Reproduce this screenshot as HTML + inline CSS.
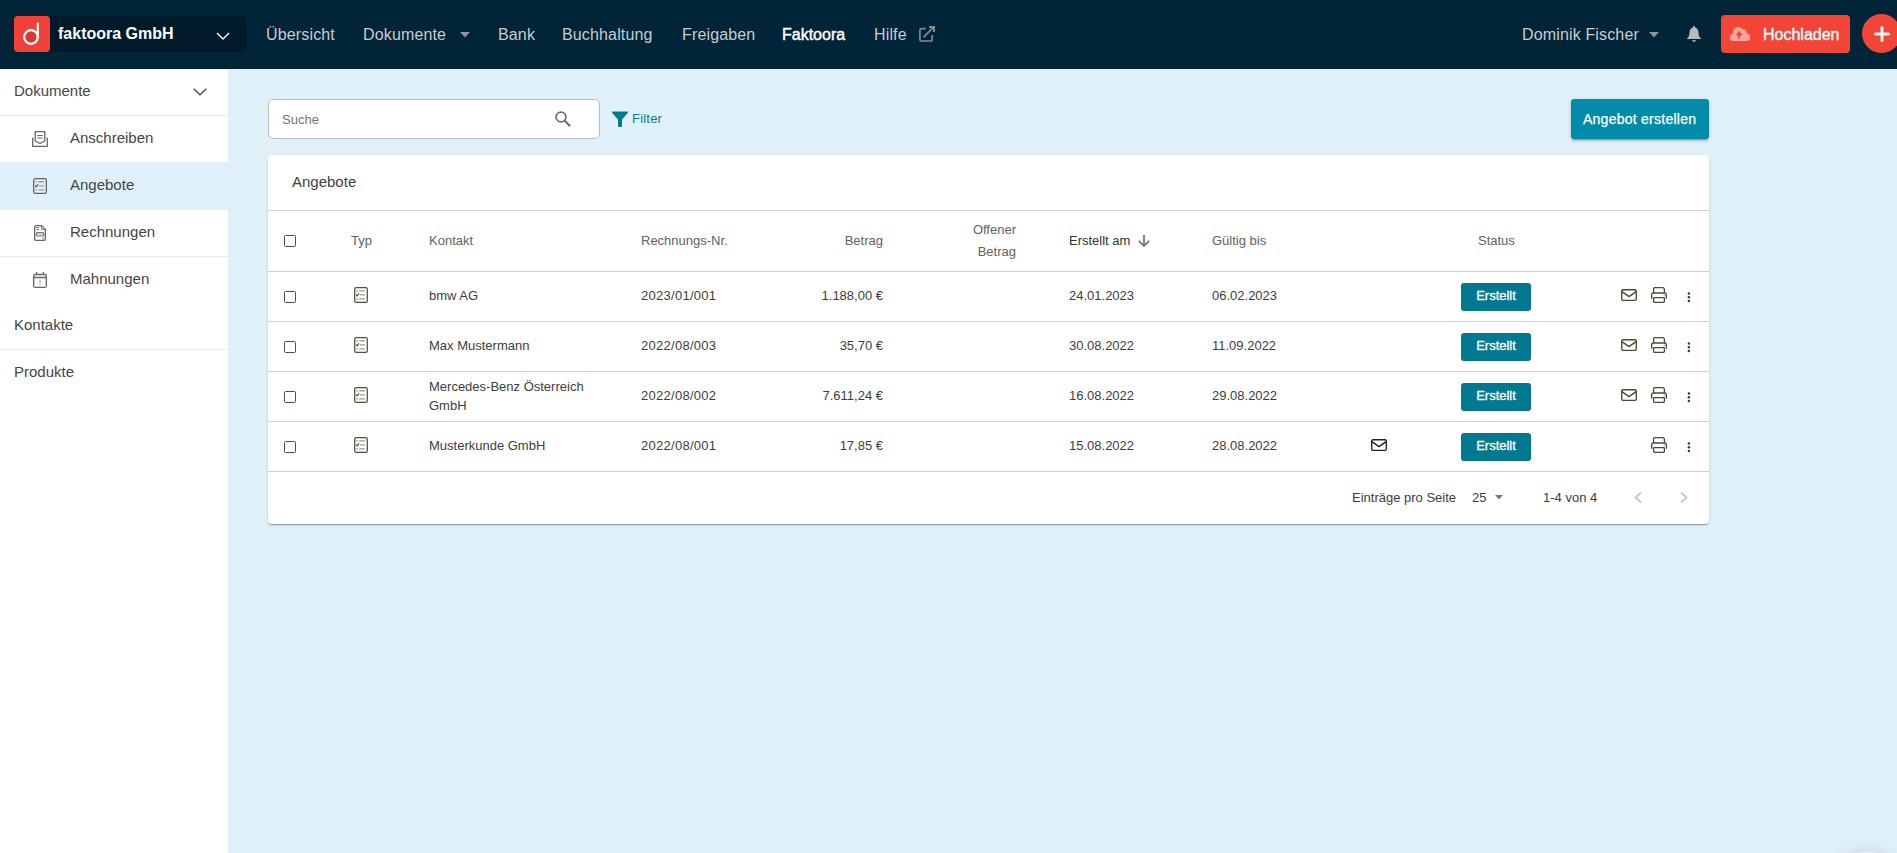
<!DOCTYPE html>
<html><head><meta charset="utf-8">
<style>
*{box-sizing:border-box;margin:0;padding:0}
html,body{width:1897px;height:853px;overflow:hidden}
body{font-family:"Liberation Sans",sans-serif;background:#e0f0f8;position:relative}
.a{position:absolute;white-space:nowrap;line-height:1}
svg{position:absolute;overflow:visible}
#nav{position:absolute;left:0;top:0;width:1897px;height:69px;background:#022437}
.nv{font-size:16px;color:#c6ccd0;top:27px;letter-spacing:0.15px}
#side{position:absolute;left:0;top:69px;width:228px;height:784px;background:#fff}
.si{font-size:15px;color:#454545}
.sl{position:absolute;left:0;width:228px;height:1px;background:#e1eef5}
#card{position:absolute;left:268px;top:155px;width:1441px;height:369px;background:#fff;border-radius:4px;box-shadow:0 2px 1px -1px rgba(0,0,0,.2),0 1px 1px 0 rgba(0,0,0,.14),0 1px 3px 0 rgba(0,0,0,.12)}
.hl{position:absolute;left:0;width:1441px;height:1px;background:#d0d0d0}
.th{font-size:13px;color:#626262}
.td{font-size:13px;color:#3d3d3d}
.cb{position:absolute;width:12px;height:12px;border:1.5px solid #4f4e3c;border-radius:1.5px}
.st{position:absolute;width:70px;height:28px;background:#037891;border-radius:3px;color:#fff;font-size:13px;line-height:26px;text-align:center;-webkit-text-stroke:0.3px #fff}
</style></head><body>

<div id="nav">
  <div style="position:absolute;left:14px;top:16px;width:232px;height:36px;background:#011b2a;border-radius:4px"></div>
  <div style="position:absolute;left:14px;top:16px;width:36px;height:36px;background:#ef4239;border-radius:4px"></div>
  <svg style="left:14px;top:16px" width="36" height="36" viewBox="0 0 36 36">
    <circle cx="17" cy="21" r="6.8" fill="#d63a33" stroke="#fff" stroke-width="2.2"/>
    <line x1="23.8" y1="7.5" x2="23.8" y2="21.5" stroke="#fff" stroke-width="2.2" stroke-linecap="round"/>
  </svg>
  <div class="a" style="left:58px;top:26px;font-size:16px;font-weight:700;color:#fff">faktoora GmbH</div>
  <svg style="left:216px;top:32px" width="14" height="8" viewBox="0 0 14 8"><path d="M1 1 L7 7 L13 1" fill="none" stroke="#fff" stroke-width="1.4"/></svg>

  <div class="a nv" style="left:266px">Übersicht</div>
  <div class="a nv" style="left:363px">Dokumente</div>
  <svg style="left:460px;top:32px" width="10" height="6"><path d="M0 0 L10 0 L5 5.5Z" fill="#8a959c"/></svg>
  <div class="a nv" style="left:498px">Bank</div>
  <div class="a nv" style="left:562px">Buchhaltung</div>
  <div class="a nv" style="left:682px">Freigaben</div>
  <div class="a nv" style="left:782px;color:#fff;letter-spacing:0;-webkit-text-stroke:0.4px #fff">Faktoora</div>
  <div class="a nv" style="left:874px">Hilfe</div>
  <svg style="left:919px;top:26px" width="16" height="16" viewBox="0 0 16 16"><path d="M6.8 2.7 H2.6 Q0.9 2.7 0.9 4.4 V13.3 Q0.9 15 2.6 15 H11.5 Q13.2 15 13.2 13.3 V9.1" fill="none" stroke="#7d8a93" stroke-width="1.7"/><path d="M4.4 11.4 L14.6 1.2" stroke="#7d8a93" stroke-width="1.7"/><path d="M10.1 1.1 H15 V5.9" fill="none" stroke="#7d8a93" stroke-width="2"/></svg>

  <div class="a nv" style="left:1522px">Dominik Fischer</div>
  <svg style="left:1649px;top:32px" width="10" height="6"><path d="M0 0 L10 0 L5 5.5Z" fill="#8a959c"/></svg>
  <svg style="left:1687px;top:26px" width="14" height="16" viewBox="0 0 14 16"><path d="M7 0 C7.8 0 8.1 0.6 8.1 1.5 C10.4 2.2 11.5 4.3 11.6 7 C11.7 9.5 12 10.9 13.9 12.2 V13 H0.1 V12.2 C2 10.9 2.3 9.5 2.4 7 C2.5 4.3 3.6 2.2 5.9 1.5 C5.9 0.6 6.2 0 7 0Z M5 14.2 H9 C8.8 15.2 8 15.8 7 15.8 C6 15.8 5.2 15.2 5 14.2Z" fill="#b4bcc1"/></svg>

  <div style="position:absolute;left:1721px;top:15px;width:129px;height:38px;background:#f24437;border-radius:4px"></div>
  <svg style="left:1729px;top:26px" width="22" height="16" viewBox="0 0 22 16"><g fill="#f9a39b"><circle cx="4.5" cy="11.4" r="3.7"/><circle cx="9.2" cy="6.4" r="5.4"/><circle cx="14.2" cy="6.6" r="3.4"/><circle cx="17.3" cy="11.3" r="3.8"/><rect x="4.5" y="9" width="12.8" height="6.1"/></g><path d="M10.1 4.7 L13.5 9.5 H10.95 V12.7 H9.25 V9.5 H6.7Z" fill="#f24437"/></svg>
  <div class="a" style="left:1763px;top:27px;font-size:16px;color:#fff;-webkit-text-stroke:0.35px #fff">Hochladen</div>
  <div style="position:absolute;left:1862px;top:14px;width:39px;height:39px;background:#f24437;border-radius:50%"></div>
  <svg style="left:1874px;top:26px" width="16" height="16" viewBox="0 0 16 16"><path d="M8 1.5 V14.5 M1.5 8 H14.5" stroke="#eef0f2" stroke-width="3" stroke-linecap="round"/></svg>
</div>

<div id="side">
  <div class="a si" style="left:14px;top:14px">Dokumente</div>
  <svg style="left:193px;top:19px" width="14" height="8" viewBox="0 0 14 8"><path d="M0.7 0.7 L7 6.8 L13.3 0.7" fill="none" stroke="#4b4b3d" stroke-width="1.4"/></svg>
  <div class="sl" style="top:46px"></div>
  <!-- Anschreiben -->
  <svg style="left:32px;top:62px" width="16" height="16" viewBox="0 0 16 16"><path d="M0.7 6.5 V15.3 H15.3 V6.5" fill="none" stroke="#666" stroke-width="1.3" stroke-linejoin="round"/><path d="M3.2 0.7 H12.8 V10 L8 12.5 L3.2 10Z" fill="none" stroke="#666" stroke-width="1.3" stroke-linejoin="round"/><path d="M5.3 4.5 H10.7 M5.3 7 H10.7" stroke="#666" stroke-width="1.2"/></svg>
  <div class="a si" style="left:70px;top:61px">Anschreiben</div>
  <!-- Angebote selected -->
  <div style="position:absolute;left:0;top:93px;width:228px;height:48px;background:#e0f0f8"></div>
  <svg style="left:33px;top:109px" width="14" height="16" viewBox="0 0 14 16"><rect x="0.65" y="0.65" width="12.7" height="14.7" rx="1.6" fill="none" stroke="#666" stroke-width="1.3"/><path d="M2.4 3.8 H3.8 M5.3 3.8 H11.1 M6 7.9 H11.1 M2.4 11.9 H3.8 M5.3 11.9 H11.1" stroke="#a0a0a0" stroke-width="1.4"/><path d="M2.2 7.7 L3.2 8.8 L5 6.4" fill="none" stroke="#555" stroke-width="1.2"/></svg>
  <div class="a si" style="left:70px;top:108px">Angebote</div>
  <!-- Rechnungen -->
  <svg style="left:34px;top:156px" width="12" height="16" viewBox="0 0 12 16"><path d="M2 0.65 H7.6 L11.35 4.4 V14 Q11.35 15.35 10 15.35 H2 Q0.65 15.35 0.65 14 V2 Q0.65 0.65 2 0.65Z" fill="none" stroke="#666" stroke-width="1.3" stroke-linejoin="round"/><path d="M7.6 0.8 V4.4 H11.2" fill="none" stroke="#777" stroke-width="1"/><path d="M2.2 2.6 H5 M2.2 4.7 H5 M8.2 13.2 H10" stroke="#666" stroke-width="1"/><rect x="2.3" y="7.7" width="7.4" height="3.3" rx="1" fill="#ddd" stroke="#777" stroke-width="1.2"/></svg>
  <div class="a si" style="left:70px;top:155px">Rechnungen</div>
  <div class="sl" style="top:187px"></div>
  <!-- Mahnungen -->
  <svg style="left:33px;top:203px" width="14" height="16" viewBox="0 0 14 16"><rect x="0.65" y="2.5" width="12.7" height="12.85" rx="1.5" fill="none" stroke="#666" stroke-width="1.3"/><path d="M0.65 5.5 H13.35 M3.6 0 V2.5 M10.4 0 V2.5" stroke="#666" stroke-width="1.3"/><path d="M7 7.5 V11 M7 12.3 V13.5" stroke="#aaa" stroke-width="1.3"/></svg>
  <div class="a si" style="left:70px;top:202px">Mahnungen</div>
  <div class="a si" style="left:14px;top:248px">Kontakte</div>
  <div class="sl" style="top:280px"></div>
  <div class="a si" style="left:14px;top:295px">Produkte</div>
</div>

<!-- search -->
<div style="position:absolute;left:268px;top:99px;width:332px;height:40px;background:#fff;border:1px solid #bdbdbd;border-radius:5px"></div>
<div class="a" style="left:282px;top:113px;font-size:13px;color:#757575">Suche</div>
<svg style="left:555px;top:111px" width="16" height="16" viewBox="0 0 16 16"><circle cx="6" cy="6" r="4.9" fill="none" stroke="#6d6d6d" stroke-width="1.8"/><path d="M9.5 9.5 L15.2 15.2" stroke="#6d6d6d" stroke-width="2"/></svg>
<svg style="left:612px;top:111px" width="16" height="16" viewBox="0 0 16 16"><path d="M0.2 1.9 Q-0.3 0.5 1.2 0.5 H14.8 Q16.3 0.5 15.8 1.9 L10 8.6 V15 Q10 16 9 16 H7 Q6 16 6 15 V8.6Z" fill="#037891"/></svg>
<div class="a" style="left:632px;top:112px;font-size:13px;color:#0a7d96;letter-spacing:0.2px">Filter</div>

<div style="position:absolute;left:1571px;top:99px;width:138px;height:40px;background:#028ca9;border-radius:3px;box-shadow:0 3px 1px -2px rgba(0,0,0,.2),0 2px 2px 0 rgba(0,0,0,.14),0 1px 5px 0 rgba(0,0,0,.12)"></div>
<div class="a" style="left:1583px;top:112px;font-size:14px;color:#fff;letter-spacing:0.25px;-webkit-text-stroke:0.25px #fff">Angebot erstellen</div>

<div id="card">
  <div class="a" style="left:24px;top:19px;font-size:15px;color:#3f3f3f">Angebote</div>
  <div class="hl" style="top:55px"></div>
  <div class="hl" style="top:116px"></div>
  <div class="hl" style="top:166px"></div>
  <div class="hl" style="top:216px"></div>
  <div class="hl" style="top:266px"></div>
  <div class="hl" style="top:316px"></div>
  <div class="cb" style="left:16px;top:80px"></div>
  <div class="a th" style="left:83px;top:79px">Typ</div>
  <div class="a th" style="left:161px;top:79px">Kontakt</div>
  <div class="a th" style="left:373px;top:79px">Rechnungs-Nr.</div>
  <div class="a th" style="right:826px;top:79px">Betrag</div>
  <div class="a th" style="right:693px;text-align:right;line-height:22px;top:64px;white-space:normal;width:60px">Offener<br>Betrag</div>
  <div class="a th" style="left:801px;top:79px;color:#333">Erstellt am</div>
  <svg style="left:870px;top:80px" width="12" height="12" viewBox="0 0 12 12"><path d="M6 0 V11 M0.8 5.8 L6 11 L11.2 5.8" fill="none" stroke="#777" stroke-width="1.8"/></svg>
  <div class="a th" style="left:944px;top:79px">Gültig bis</div>
  <div class="a th" style="left:1210px;top:79px">Status</div>
  <div class="cb" style="left:16px;top:136px"></div>
  <svg style="left:86px;top:132px" width="14" height="16" viewBox="0 0 14 16"><rect x="0.7" y="0.7" width="12.6" height="14.6" rx="1.6" fill="none" stroke="#4f4e3c" stroke-width="1.25"/><path d="M2.2 3.9 H3.9 M5.2 3.9 H11.1 M5.9 7.9 H11.1 M2.2 11.9 H3.9 M5.2 11.9 H11.1" stroke="#9b9a8b" stroke-width="1.3"/><path d="M2.1 7.6 L3.1 8.8 L5 6.3" fill="none" stroke="#4f4e3c" stroke-width="1.2"/></svg>
  <div class="a td" style="left:161px;top:134px">bmw AG</div>
  <div class="a td" style="left:373px;top:134px;letter-spacing:0.27px">2023/01/001</div>
  <div class="a td" style="right:826px;top:134px">1.188,00 €</div>
  <div class="a td" style="left:801px;top:134px">24.01.2023</div>
  <div class="a td" style="left:944px;top:134px">06.02.2023</div>
  <div class="st" style="left:1193px;top:128px">Erstellt</div>
  <svg style="left:1353px;top:134px" width="16" height="12" viewBox="0 0 16 12"><rect x="0.7" y="0.7" width="14.6" height="10.6" rx="1.3" fill="none" stroke="#4a4935" stroke-width="1.35"/><path d="M0.9 2.6 L8 7.6 L15.1 2.6" fill="none" stroke="#4a4935" stroke-width="1.35" stroke-linejoin="round"/></svg>
  <svg style="left:1383px;top:132px" width="16" height="16" viewBox="0 0 16 16"><path d="M2.6 6 V1.9 Q2.6 0.7 3.8 0.7 H11.5 Q13.4 0.7 13.4 2.6 V6" fill="none" stroke="#4a4935" stroke-width="1.3"/><path d="M0.7 11.7 V7.6 Q0.7 6 2.3 6 H13.7 Q15.3 6 15.3 7.6 V11.7" fill="none" stroke="#4a4935" stroke-width="1.3"/><rect x="2.6" y="10.6" width="10.8" height="4.7" rx="0.8" fill="none" stroke="#4a4935" stroke-width="1.3"/><circle cx="13.2" cy="8.2" r="0.55" fill="#4a4935"/></svg>
  <svg style="left:1420px;top:137px" width="3" height="11" viewBox="0 0 3 11"><circle cx="0.9" cy="1.4" r="1.25" fill="#3e3d2c"/><circle cx="0.9" cy="5.2" r="1.25" fill="#3e3d2c"/><circle cx="0.9" cy="9.0" r="1.25" fill="#3e3d2c"/></svg>
  <div class="cb" style="left:16px;top:186px"></div>
  <svg style="left:86px;top:182px" width="14" height="16" viewBox="0 0 14 16"><rect x="0.7" y="0.7" width="12.6" height="14.6" rx="1.6" fill="none" stroke="#4f4e3c" stroke-width="1.25"/><path d="M2.2 3.9 H3.9 M5.2 3.9 H11.1 M5.9 7.9 H11.1 M2.2 11.9 H3.9 M5.2 11.9 H11.1" stroke="#9b9a8b" stroke-width="1.3"/><path d="M2.1 7.6 L3.1 8.8 L5 6.3" fill="none" stroke="#4f4e3c" stroke-width="1.2"/></svg>
  <div class="a td" style="left:161px;top:184px">Max Mustermann</div>
  <div class="a td" style="left:373px;top:184px;letter-spacing:0.27px">2022/08/003</div>
  <div class="a td" style="right:826px;top:184px">35,70 €</div>
  <div class="a td" style="left:801px;top:184px">30.08.2022</div>
  <div class="a td" style="left:944px;top:184px">11.09.2022</div>
  <div class="st" style="left:1193px;top:178px">Erstellt</div>
  <svg style="left:1353px;top:184px" width="16" height="12" viewBox="0 0 16 12"><rect x="0.7" y="0.7" width="14.6" height="10.6" rx="1.3" fill="none" stroke="#4a4935" stroke-width="1.35"/><path d="M0.9 2.6 L8 7.6 L15.1 2.6" fill="none" stroke="#4a4935" stroke-width="1.35" stroke-linejoin="round"/></svg>
  <svg style="left:1383px;top:182px" width="16" height="16" viewBox="0 0 16 16"><path d="M2.6 6 V1.9 Q2.6 0.7 3.8 0.7 H11.5 Q13.4 0.7 13.4 2.6 V6" fill="none" stroke="#4a4935" stroke-width="1.3"/><path d="M0.7 11.7 V7.6 Q0.7 6 2.3 6 H13.7 Q15.3 6 15.3 7.6 V11.7" fill="none" stroke="#4a4935" stroke-width="1.3"/><rect x="2.6" y="10.6" width="10.8" height="4.7" rx="0.8" fill="none" stroke="#4a4935" stroke-width="1.3"/><circle cx="13.2" cy="8.2" r="0.55" fill="#4a4935"/></svg>
  <svg style="left:1420px;top:187px" width="3" height="11" viewBox="0 0 3 11"><circle cx="0.9" cy="1.4" r="1.25" fill="#3e3d2c"/><circle cx="0.9" cy="5.2" r="1.25" fill="#3e3d2c"/><circle cx="0.9" cy="9.0" r="1.25" fill="#3e3d2c"/></svg>
  <div class="cb" style="left:16px;top:236px"></div>
  <svg style="left:86px;top:232px" width="14" height="16" viewBox="0 0 14 16"><rect x="0.7" y="0.7" width="12.6" height="14.6" rx="1.6" fill="none" stroke="#4f4e3c" stroke-width="1.25"/><path d="M2.2 3.9 H3.9 M5.2 3.9 H11.1 M5.9 7.9 H11.1 M2.2 11.9 H3.9 M5.2 11.9 H11.1" stroke="#9b9a8b" stroke-width="1.3"/><path d="M2.1 7.6 L3.1 8.8 L5 6.3" fill="none" stroke="#4f4e3c" stroke-width="1.2"/></svg>
  <div class="a td" style="left:161px;top:225px">Mercedes-Benz Österreich</div>
  <div class="a td" style="left:161px;top:244px">GmbH</div>
  <div class="a td" style="left:373px;top:234px;letter-spacing:0.27px">2022/08/002</div>
  <div class="a td" style="right:826px;top:234px">7.611,24 €</div>
  <div class="a td" style="left:801px;top:234px">16.08.2022</div>
  <div class="a td" style="left:944px;top:234px">29.08.2022</div>
  <div class="st" style="left:1193px;top:228px">Erstellt</div>
  <svg style="left:1353px;top:234px" width="16" height="12" viewBox="0 0 16 12"><rect x="0.7" y="0.7" width="14.6" height="10.6" rx="1.3" fill="none" stroke="#4a4935" stroke-width="1.35"/><path d="M0.9 2.6 L8 7.6 L15.1 2.6" fill="none" stroke="#4a4935" stroke-width="1.35" stroke-linejoin="round"/></svg>
  <svg style="left:1383px;top:232px" width="16" height="16" viewBox="0 0 16 16"><path d="M2.6 6 V1.9 Q2.6 0.7 3.8 0.7 H11.5 Q13.4 0.7 13.4 2.6 V6" fill="none" stroke="#4a4935" stroke-width="1.3"/><path d="M0.7 11.7 V7.6 Q0.7 6 2.3 6 H13.7 Q15.3 6 15.3 7.6 V11.7" fill="none" stroke="#4a4935" stroke-width="1.3"/><rect x="2.6" y="10.6" width="10.8" height="4.7" rx="0.8" fill="none" stroke="#4a4935" stroke-width="1.3"/><circle cx="13.2" cy="8.2" r="0.55" fill="#4a4935"/></svg>
  <svg style="left:1420px;top:237px" width="3" height="11" viewBox="0 0 3 11"><circle cx="0.9" cy="1.4" r="1.25" fill="#3e3d2c"/><circle cx="0.9" cy="5.2" r="1.25" fill="#3e3d2c"/><circle cx="0.9" cy="9.0" r="1.25" fill="#3e3d2c"/></svg>
  <div class="cb" style="left:16px;top:286px"></div>
  <svg style="left:86px;top:282px" width="14" height="16" viewBox="0 0 14 16"><rect x="0.7" y="0.7" width="12.6" height="14.6" rx="1.6" fill="none" stroke="#4f4e3c" stroke-width="1.25"/><path d="M2.2 3.9 H3.9 M5.2 3.9 H11.1 M5.9 7.9 H11.1 M2.2 11.9 H3.9 M5.2 11.9 H11.1" stroke="#9b9a8b" stroke-width="1.3"/><path d="M2.1 7.6 L3.1 8.8 L5 6.3" fill="none" stroke="#4f4e3c" stroke-width="1.2"/></svg>
  <div class="a td" style="left:161px;top:284px">Musterkunde GmbH</div>
  <div class="a td" style="left:373px;top:284px;letter-spacing:0.27px">2022/08/001</div>
  <div class="a td" style="right:826px;top:284px">17,85 €</div>
  <div class="a td" style="left:801px;top:284px">15.08.2022</div>
  <div class="a td" style="left:944px;top:284px">28.08.2022</div>
  <div class="st" style="left:1193px;top:278px">Erstellt</div>
  <svg style="left:1103px;top:284px" width="16" height="12" viewBox="0 0 16 12"><rect x="0.7" y="0.7" width="14.6" height="10.6" rx="1.3" fill="none" stroke="#222" stroke-width="1.35"/><path d="M0.9 2.6 L8 7.6 L15.1 2.6" fill="none" stroke="#222" stroke-width="1.35" stroke-linejoin="round"/></svg>
  <svg style="left:1383px;top:282px" width="16" height="16" viewBox="0 0 16 16"><path d="M2.6 6 V1.9 Q2.6 0.7 3.8 0.7 H11.5 Q13.4 0.7 13.4 2.6 V6" fill="none" stroke="#4a4935" stroke-width="1.3"/><path d="M0.7 11.7 V7.6 Q0.7 6 2.3 6 H13.7 Q15.3 6 15.3 7.6 V11.7" fill="none" stroke="#4a4935" stroke-width="1.3"/><rect x="2.6" y="10.6" width="10.8" height="4.7" rx="0.8" fill="none" stroke="#4a4935" stroke-width="1.3"/><circle cx="13.2" cy="8.2" r="0.55" fill="#4a4935"/></svg>
  <svg style="left:1420px;top:287px" width="3" height="11" viewBox="0 0 3 11"><circle cx="0.9" cy="1.4" r="1.25" fill="#3e3d2c"/><circle cx="0.9" cy="5.2" r="1.25" fill="#3e3d2c"/><circle cx="0.9" cy="9.0" r="1.25" fill="#3e3d2c"/></svg>
  <div class="a td" style="left:1084px;top:336px">Einträge pro Seite</div>
  <div class="a td" style="left:1204px;top:336px">25</div>
  <svg style="left:1227px;top:340px" width="8" height="5" viewBox="0 0 8 5"><path d="M0 0 H8 L4 4.5Z" fill="#777"/></svg>
  <div class="a td" style="left:1275px;top:336px">1-4 von 4</div>
  <svg style="left:1366px;top:337px" width="8" height="11" viewBox="0 0 8 11"><path d="M7 0.7 L1.5 5.5 L7 10.3" fill="none" stroke="#bdbdbd" stroke-width="1.6"/></svg>
  <svg style="left:1412px;top:337px" width="8" height="11" viewBox="0 0 8 11"><path d="M1 0.7 L6.5 5.5 L1 10.3" fill="none" stroke="#bdbdbd" stroke-width="1.6"/></svg>
</div>
<div style="position:absolute;left:1839px;top:851px;width:56px;height:56px;border-radius:50%;background:#e0f0f8;box-shadow:0 3px 5px -1px rgba(0,0,0,.2),0 6px 10px 0 rgba(0,0,0,.14),0 1px 18px 0 rgba(0,0,0,.12)"></div>
</body></html>
